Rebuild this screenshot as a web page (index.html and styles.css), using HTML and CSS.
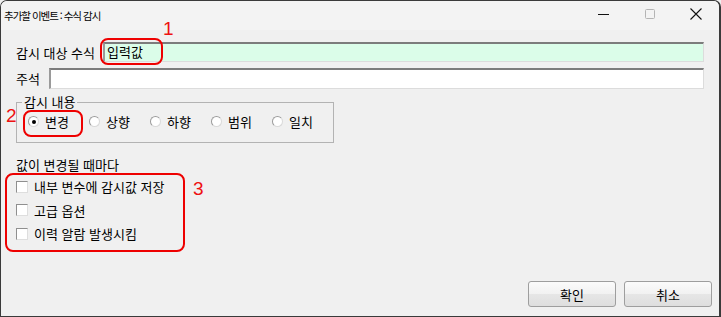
FILE: index.html
```html
<!DOCTYPE html>
<html lang="ko">
<head>
<meta charset="utf-8">
<title>추가할 이벤트 : 수식 감시</title>
<link rel="stylesheet" href="styles.css">
</head>
<body>
<div class="window">
  <div class="titlebar">
    <div class="title">추가할 이벤트 : 수식 감시</div>
    <div class="caption">
      <div class="cap-btn"><svg width="12" height="12" viewBox="0 0 12 12"><line x1="0" y1="6.5" x2="11" y2="6.5" stroke="#111" stroke-width="1"/></svg></div>
      <div class="cap-btn"><svg width="12" height="12" viewBox="0 0 12 12"><rect x="1.5" y="1.5" width="9" height="9" rx="1" fill="none" stroke="#b4b4b4" stroke-width="1"/></svg></div>
      <div class="cap-btn"><svg width="12" height="12" viewBox="0 0 12 12"><path d="M0.5 0.5 L11.5 11.5 M11.5 0.5 L0.5 11.5" stroke="#111" stroke-width="1.1"/></svg></div>
    </div>
  </div>

  <div class="content">
    <div class="row row-first">
      <label class="lbl lbl-wide">감시 대상 수식</label>
      <div class="field field-green">입력값</div>
    </div>
    <div class="row row-second">
      <label class="lbl lbl-narrow">주석</label>
      <div class="field"></div>
    </div>

    <fieldset class="group">
      <legend class="legend">감시 내용</legend>
      <div class="radios">
        <div class="radio-item"><span class="radio checked"></span><span>변경</span></div>
        <div class="radio-item"><span class="radio"></span><span>상향</span></div>
        <div class="radio-item"><span class="radio"></span><span>하향</span></div>
        <div class="radio-item"><span class="radio"></span><span>범위</span></div>
        <div class="radio-item"><span class="radio"></span><span>일치</span></div>
      </div>
    </fieldset>

    <div class="section-label">값이 변경될 때마다</div>
    <div class="checks">
      <div class="check-item"><span class="checkbox"></span><span>내부 변수에 감시값 저장</span></div>
      <div class="check-item"><span class="checkbox"></span><span>고급 옵션</span></div>
      <div class="check-item"><span class="checkbox"></span><span>이력 알람 발생시킴</span></div>
    </div>

    <div class="buttons">
      <button class="btn">확인</button>
      <button class="btn">취소</button>
    </div>
  </div>

  <div class="mark mark-1"></div>
  <div class="mark mark-2"></div>
  <div class="mark mark-3"></div>
  <div class="num num-1">1</div>
  <div class="num num-2">2</div>
  <div class="num num-3">3</div>
</div>
</body>
</html>
```

FILE: styles.css
```css
html, body {
  margin: 0;
  padding: 0;
  background: #f0f0f0;
}

.window {
  position: relative;
  width: 721px;
  height: 317px;
  box-sizing: border-box;
  border: 1px solid #3a3a3a;
  border-right-width: 2px;
  border-radius: 7px 7px 0 0;
  background: #f0f0f0;
  display: flex;
  flex-direction: column;
  overflow: hidden;
  font-family: "Noto Sans CJK KR", "Noto Sans", sans-serif;
  font-size: 13px;
  color: #000;
}

.titlebar {
  height: 29px;
  display: flex;
  align-items: center;
  justify-content: space-between;
  background: #f3f3f3;
}

.title {
  padding-left: 3px;
  font-size: 10.5px;
  letter-spacing: -1px;
  margin-top: -1px;
}

.caption {
  display: flex;
  align-self: stretch;
}

.cap-btn {
  width: 46px;
  display: flex;
  align-items: center;
  justify-content: center;
  margin-top: -3px;
}

.content {
  flex: 1;
  display: flex;
  flex-direction: column;
  padding: 0 15px 0 15px;
}

.row {
  display: flex;
  align-items: center;
}

.row-first {
  margin-top: 12px;
  height: 20px;
}

.row-second {
  margin-top: 6px;
  height: 21px;
}

.lbl {
  flex: none;
  white-space: nowrap;
}

.lbl-wide { width: 87px; }
.lbl-narrow { width: 33px; }

.field {
  flex: 1;
  height: 100%;
  box-sizing: border-box;
  background: #fff;
  border-top: 2px solid #7c7c7c;
  border-left: 2px solid #9a9a9a;
  border-bottom: 1px solid #dcdcdc;
  border-right: 1px solid #dcdcdc;
  padding-left: 2px;
  line-height: 16px;
}

.field-green {
  background: #dbfde9;
}

.group {
  margin: 6px 0 0 0;
  width: 314px;
  box-sizing: border-box;
  border: 1px solid #b3b3b3;
  padding: 6px 0 14px 11px;
}

.legend {
  margin-left: -6px;
  padding: 0 2px;
  line-height: 14px;
}

.radios {
  display: flex;
  height: 13px;
  align-items: center;
}

.radio-item {
  width: 61px;
  flex: none;
  display: flex;
  align-items: center;
  gap: 6px;
  white-space: nowrap;
}

.radio {
  width: 11px;
  height: 11px;
  box-sizing: border-box;
  border-radius: 50%;
  border: 1px solid #9b9b9b;
  border-right-color: #d9d9d9;
  border-bottom-color: #d9d9d9;
  background: #fff;
  position: relative;
  flex: none;
}

.radio.checked::after {
  content: "";
  position: absolute;
  left: 2.5px;
  top: 2.5px;
  width: 4px;
  height: 4px;
  border-radius: 50%;
  background: #000;
}

.section-label {
  margin-top: 14px;
  height: 15px;
  line-height: 15px;
}

.checks {
  display: flex;
  flex-direction: column;
  margin-top: 3px;
}

.check-item {
  height: 23.5px;
  display: flex;
  align-items: center;
  gap: 6px;
  white-space: nowrap;
}

.checkbox {
  width: 12px;
  height: 12px;
  box-sizing: border-box;
  border: 1px solid #8f8f8f;
  border-right-color: #dedede;
  border-bottom-color: #dedede;
  background: #fff;
  flex: none;
}

.buttons {
  margin-top: auto;
  margin-right: -8px;
  margin-bottom: 9px;
  display: flex;
  justify-content: flex-end;
  gap: 8px;
}

.btn {
  width: 88px;
  height: 26px;
  box-sizing: border-box;
  border: 1px solid #9e9e9e;
  border-radius: 3px;
  background: linear-gradient(#fbfbfb 0%, #f1f1f1 50%, #e6e6e6 51%, #dedede 100%);
  font-family: "Noto Sans CJK KR", "Noto Sans", sans-serif;
  font-size: 13px;
  color: #000;
  padding: 0;
}

.mark {
  position: absolute;
  border: 2px solid #ee0000;
  border-radius: 8px;
  box-sizing: border-box;
}

.mark-1 { left: 99px; top: 37px; width: 63px; height: 27px; }
.mark-2 { left: 22px; top: 109px; width: 60px; height: 27px; }
.mark-3 { left: 4px; top: 172px; width: 180px; height: 79px; }

.num {
  position: absolute;
  font-family: "Liberation Sans", "Noto Sans", sans-serif;
  font-size: 19px;
  line-height: 19px;
  color: #ee1111;
}

.num-1 { left: 162px; top: 18px; }
.num-2 { left: 5px; top: 105px; }
.num-3 { left: 192px; top: 178px; }
```
